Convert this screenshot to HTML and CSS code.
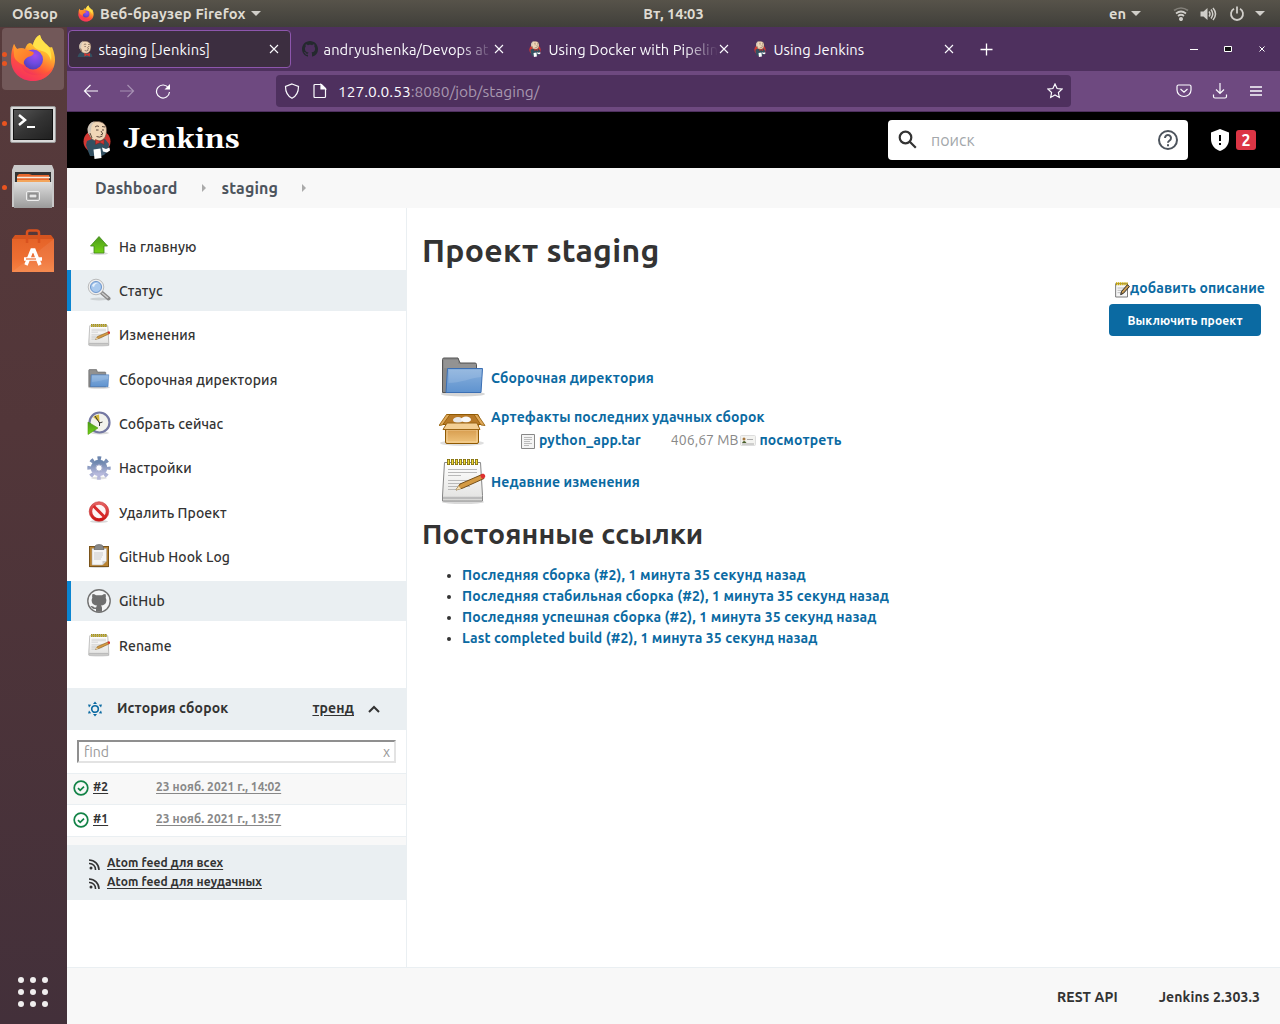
FILE: index.html
```html
<!DOCTYPE html>
<html lang="ru">
<head>
<meta charset="utf-8">
<title>staging [Jenkins]</title>
<link rel="stylesheet" href="styles.css">
</head>
<body>
<svg class="sprite" aria-hidden="true">
  <defs>
    <linearGradient id="fx-body" x1=".8" y1="0" x2=".3" y2="1"><stop offset="0" stop-color="#fff04a"/><stop offset=".35" stop-color="#ffb32e"/><stop offset=".65" stop-color="#ff5a36"/><stop offset="1" stop-color="#e8127c"/></linearGradient>
    <radialGradient id="fx-globe" cx=".6" cy=".3" r=".8"><stop offset="0" stop-color="#a04bf0"/><stop offset=".5" stop-color="#6f4be0"/><stop offset="1" stop-color="#4a3bb0"/></radialGradient>
    <linearGradient id="fx-head" x1="0" y1="0" x2="1" y2="1"><stop offset="0" stop-color="#ffa030"/><stop offset="1" stop-color="#ff6a2a"/></linearGradient>
    <linearGradient id="g-folder" x1="0" y1="0" x2="0" y2="1"><stop offset="0" stop-color="#8ab1dd"/><stop offset="1" stop-color="#5f93cf"/></linearGradient>
    <linearGradient id="g-paper" x1="0" y1="0" x2="0" y2="1"><stop offset="0" stop-color="#fff"/><stop offset="1" stop-color="#e2e2e0"/></linearGradient>
    <linearGradient id="g-box" x1="0" y1="0" x2="0" y2="1"><stop offset="0" stop-color="#cf9040"/><stop offset="1" stop-color="#f0c47c"/></linearGradient>
    <linearGradient id="g-green" x1="0" y1="0" x2="0" y2="1"><stop offset="0" stop-color="#4b9a1c"/><stop offset="1" stop-color="#73d216"/></linearGradient>
    <linearGradient id="g-gear" x1="0" y1="0" x2="0" y2="1"><stop offset="0" stop-color="#6d86ae"/><stop offset="1" stop-color="#b7b9dc"/></linearGradient>
    <linearGradient id="g-red" x1="0" y1="0" x2="0" y2="1"><stop offset="0" stop-color="#e46060"/><stop offset="1" stop-color="#cc1515"/></linearGradient>
    <linearGradient id="g-metal" x1="0" y1="0" x2="0" y2="1"><stop offset="0" stop-color="#dedede"/><stop offset="1" stop-color="#9b9b9b"/></linearGradient>
    <linearGradient id="g-screen" x1="0" y1="0" x2="1" y2="1"><stop offset="0" stop-color="#565656"/><stop offset=".5" stop-color="#343434"/><stop offset="1" stop-color="#202020"/></linearGradient>
    <linearGradient id="g-bag" x1="0" y1="0" x2="0" y2="1"><stop offset="0" stop-color="#e56328"/><stop offset=".6" stop-color="#ee6f33"/><stop offset="1" stop-color="#f58243"/></linearGradient>
  </defs>
  <symbol id="firefox" viewBox="0 0 46 48">
    <path fill="url(#fx-body)" d="M4 10c1 2 2 4 3 5 3-1 6-1 8 0C17 9 20 7 23 11c1-5 4-9 7-10 1 5 5 8 8 11 1 1 3 2 4 1 2 5 3 9 3 13 0 12-10 21-22 21S1 38 1 25c0-6 1-11 3-15z"/>
    <path fill="#ffe24a" d="M30 1c1 5 5 8 8 11 3 4 4 10 3 15-1-5-4-9-9-10-4-1-8-3-9-6 1-5 4-9 7-10z"/>
    <circle cx="23" cy="25.500" r="10" fill="url(#fx-globe)"/>
    <path fill="url(#fx-head)" d="M4 10c1 2 2 4 3 5 3-1 6-1 8 0l8 3c2 1 0 4-5 5-3 2-5 4-4 8-6-2-10-6-10-10 0-4-1-7 0-11z"/>
    <path fill="#ff4a48" opacity=".55" d="M1 26c0 12 9 21 22 21 10 0 18-6 21-15-5 7-12 10-19 9C15 40 12 35 11 30 7 28 4 24 1 26z"/>
  </symbol>
  <symbol id="butler-head" viewBox="0 0 28 28">
    <path fill="#f0d6b7" stroke="#6b5345" stroke-width=".7" d="M5 9c0-6 4-8.500 9-8.500S23.500 3 23.500 9c0 6-2 11-8.500 11C9 20 6 16 5 9z"/>
    <path fill="#cfc5b8" d="M4.500 8c1-4 3-7 7-7.500C9 3 8 6 8 9l-1 4.500-2-1z"/>
    <path stroke="#4b382e" stroke-width=".9" fill="none" d="M12 6q2-2 4-.5M19 5.500l3 .5M13 9h2.500M19 9h2M18 10l1.800 3-2 .8M13.500 15.500q3 1.500 6-.5M7 12l2 5"/>
  </symbol>
  <symbol id="jenkins" viewBox="0 0 28 38">
    <ellipse cx="14" cy="20.500" rx="13.500" ry="12" fill="#d33833"/>
    <path fill="#335061" d="M4 20l5-2 6 2 7-2 4 5-1 7-4 4-3 1H7l-2-5-2-6z"/>
    <use href="#butler-head" width="28" height="28"/>
    <path fill="#d33833" stroke="#81201c" stroke-width=".5" d="M12.500 18.500l4.500 2 4-2v5l-4-2-4.500 2z"/>
    <path fill="#fff" d="M10.500 28.500l7-1 1 9.500-7 1zM19 26.500l4 1.500 3.500-1.500.5 3-3 2-4-1z"/>
  </symbol>
  <symbol id="octocat" viewBox="0 0 16 16">
    <path d="M8 0C3.580 0 0 3.580 0 8c0 3.540 2.290 6.530 5.470 7.590.4.070.55-.17.55-.38 0-.19-.01-.82-.01-1.490-2.010.37-2.530-.49-2.690-.94-.09-.23-.48-.94-.82-1.130-.28-.15-.68-.52-.01-.53.63-.01 1.080.58 1.230.82.72 1.210 1.870.87 2.330.66.07-.52.28-.87.51-1.070-1.780-.2-3.640-.89-3.640-3.950 0-.87.31-1.590.82-2.150-.08-.2-.36-1.020.08-2.120 0 0 .67-.21 2.200.82.64-.18 1.320-.27 2-.27s1.360.09 2 .27c1.530-1.040 2.200-.82 2.200-.82.44 1.100.16 1.920.08 2.120.51.56.82 1.270.82 2.150 0 3.070-1.870 3.750-3.650 3.950.29.25.54.73.54 1.480 0 1.070-.01 1.930-.01 2.200 0 .21.15.46.55.38A8.010 8.010 0 0 0 16 8c0-4.420-3.580-8-8-8z"/>
  </symbol>
  <symbol id="notepad" viewBox="0 0 48 48">
    <ellipse cx="24" cy="45" rx="21" ry="2" fill="#000" opacity=".15"/>
    <path d="M5.500 5.500h36l2 33v5.500h-40V39z" fill="url(#g-paper)" stroke="#888" />
    <path d="M4 41h39" stroke="#bbb" stroke-width="2.500"/>
    <path d="M9 12.500h29M9 15.500h29M9 18.500h13M9 23.500h29M9 26.500h25M9 29.500h22M9 32.500h11" stroke="#b9b9b9" stroke-width="1"/>
    <path d="M8 5h32" stroke="#7d6b10" stroke-width="6" stroke-dasharray="3 1"/>
    <path d="M8.800 5h31" stroke="#efdc3c" stroke-width="4.500" stroke-dasharray="1.400 2.600"/>
    <path d="M17 33l4-6 22-9.500 2 4-21 9.500z" fill="#d49a42" stroke="#75501a"/>
    <path d="M17 33l2.500-4 2.500 3z" fill="#f4dfb3"/><path d="M41 18l3-1.500q3 1 2 4l-3 1.500z" fill="#dd3030"/>
  </symbol>
  <symbol id="folder" viewBox="0 0 48 48">
    <ellipse cx="24" cy="41" rx="22" ry="2.500" fill="#000" opacity=".16"/>
    <path d="M3.500 39.500v-33q0-1.500 1.500-1.500h14l2 5h15q1.500 0 1.500 1.500v28z" fill="#888" stroke="#555"/>
    <path d="M5 8h14M5 10h14M5 12h32M5 14h32" stroke="#aaa" stroke-width=".7"/>
    <path d="M8.500 15.500h35l-1.500 24h-35z" fill="url(#g-folder)" stroke="#3b6fb4"/>
    <path d="M9.500 30c12 0 22-5 33-6v-7H10z" fill="#fff" opacity=".13"/>
  </symbol>
</svg>

<div class="desktop">
  <header class="topbar">
    <span class="topbar-activities">Обзор</span>
    <span class="topbar-app"><svg class="app-icon"><use href="#firefox"/></svg><span>Веб-браузер Firefox</span><i class="caret"></i></span>
    <span class="topbar-clock">Вт, 14:03</span>
    <span class="topbar-status"><span>en</span><i class="caret"></i>
      <svg class="st-wifi" width="16" height="14" viewBox="0 0 16 14" fill="none" stroke="#d0cec9" stroke-width="1.700"><path d="M1 3.500q7-5 14 0" opacity=".4"/><path d="M3 6.500q5-4 10 0M5 9q3-2.500 6 0"/><circle cx="8" cy="12" r="1.200" fill="#d0cec9"/></svg>
      <svg class="st-vol" width="17" height="14" viewBox="0 0 17 14" fill="none" stroke="#d0cec9" stroke-width="1.500"><path d="M.5 4.500h3l4-3.500v12l-4-3.500h-3z" fill="#d0cec9" stroke="none"/><path d="M9 4.500q2 2.500 0 5M11 2.500q3.500 4.500 0 9M13 1q5 6 0 12"/></svg>
      <svg class="st-pow" width="16" height="16" viewBox="0 0 16 16" fill="none" stroke="#d0cec9" stroke-width="1.800"><path d="M5 2.800a6 6 0 1 0 6 0M8 .5v7"/></svg>
      <i class="caret last"></i>
    </span>
  </header>

  <div class="workspace">
    <nav class="dock">
      <div class="dock-item active"><i class="dots two"></i><svg width="46" height="48"><use href="#firefox"/></svg></div>
      <div class="dock-item"><i class="dots"></i>
        <svg width="46" height="40" viewBox="0 0 46 40"><rect x=".5" y="1.500" width="45" height="36" rx="1.500" fill="#d9d9d9" stroke="#999"/><rect x="3.500" y="4.500" width="39" height="30" fill="url(#g-screen)" stroke="#111"/><path d="M9 10l6 5-6 5" fill="none" stroke="#fff" stroke-width="2.500"/><path d="M17 22h8" stroke="#fff" stroke-width="2"/></svg></div>
      <div class="dock-item files"><i class="dots"></i>
        <svg width="42" height="46" viewBox="0 0 42 46"><path d="M2 1h38l2 5v37H0V6z" fill="#c9c9c9"/><rect x="3" y="8" width="36" height="12" fill="#333"/><path d="M5 12l2-2h10l3 1h17v8H5z" fill="#e9682c"/><path d="M5 13.500h33" stroke="#f5ece0" stroke-width="1.500"/><path d="M5 16h33v3H5z" fill="#f3a55c"/><path d="M2 18h38v26H2z" fill="url(#g-metal)"/><rect x="14.500" y="27.500" width="13" height="9" rx="1.500" fill="#aaa" stroke="#eee"/><rect x="17" y="30" width="8" height="4" fill="#e6e6e6" stroke="#777"/></svg></div>
      <div class="dock-item bag">
        <svg width="42" height="45" viewBox="0 0 42 45"><path d="M0 11l3-4h36l3 4z" fill="#d4541f"/><path d="M0 11h42v33H0z" fill="url(#g-bag)"/><path d="M0 44L42 11v33z" fill="#fff" opacity=".07"/><path d="M15 15V5q0-2.500 2.500-2.500h7Q27 2.500 27 5v10" fill="none" stroke="#d9521f" stroke-width="2.500"/><path d="M14 37l6-15h2l6 15M12 31h18" stroke="#fff" stroke-width="3.500" fill="none"/><path d="M14 31h10" stroke="#ee6f33" stroke-width="1.200"/></svg></div>
      <svg class="apps" width="32" height="32" viewBox="0 0 32 32"><g fill="#f0eeee"><circle cx="4" cy="4" r="3"/><circle cx="16" cy="4" r="3"/><circle cx="28" cy="4" r="3"/><circle cx="4" cy="16" r="3"/><circle cx="16" cy="16" r="3"/><circle cx="28" cy="16" r="3"/><circle cx="4" cy="28" r="3"/><circle cx="16" cy="28" r="3"/><circle cx="28" cy="28" r="3"/></g></svg>
    </nav>

    <section class="browser">
      <div class="tabs">
        <div class="tab current"><svg class="fav" viewBox="0 0 26 26"><path d="M1 26q1-6 7-8l14 2q3 2 3 6z" fill="#335061"/><use href="#butler-head" x="-1" width="28" height="28"/><path d="M12 19l4 2.500 5-2.500v6l-5-2-4 2z" fill="#d33833"/></svg><span class="tab-title">staging [Jenkins]</span><svg class="x" viewBox="0 0 10 10"><path d="M1 1l8 8M9 1l-8 8"/></svg></div>
        <div class="tab"><svg class="fav gh"><use href="#octocat"/></svg><span class="tab-title fade">andryushenka/Devops at</span><svg class="x" viewBox="0 0 10 10"><path d="M1 1l8 8M9 1l-8 8"/></svg></div>
        <div class="tab"><svg class="fav"><use href="#jenkins"/></svg><span class="tab-title fade">Using Docker with Pipelin</span><svg class="x" viewBox="0 0 10 10"><path d="M1 1l8 8M9 1l-8 8"/></svg></div>
        <div class="tab"><svg class="fav"><use href="#jenkins"/></svg><span class="tab-title">Using Jenkins</span><svg class="x" viewBox="0 0 10 10"><path d="M1 1l8 8M9 1l-8 8"/></svg></div>
        <svg class="plus" width="13" height="13" viewBox="0 0 13 13"><path d="M6.500 .5v12M.5 6.500h12" stroke="#fff" stroke-width="1.300"/></svg>
        <span class="wm">
          <svg width="8" height="8"><path d="M0 4.500h8" stroke="#fff"/></svg>
          <svg width="8" height="8"><path d="M.5 1.500h7v5h-7z" stroke="#fff" fill="#111" /></svg>
          <svg width="8" height="8"><path d="M1.500 1.500l5 5M6.500 1.500l-5 5" stroke="#fff"/></svg>
        </span>
      </div>
      <div class="navbar">
        <svg class="ic" viewBox="0 0 16 16"><path d="M15 8H2M7.500 2L1.500 8l6 6"/></svg>
        <svg class="ic dim" viewBox="0 0 16 16"><path d="M1 8h13M8.500 2l6 6-6 6"/></svg>
        <svg class="ic" viewBox="0 0 16 16"><path d="M13.500 5A6.500 6.500 0 1 0 14.500 9"/><path d="M15 1v5.500H9.500z" fill="#fff" stroke="none"/></svg>
        <div class="urlbar">
          <svg class="ic" viewBox="0 0 16 16"><path d="M8 1l6.500 2.500c0 6-2 9.500-6.500 11.800C3.500 13 1.500 9.500 1.500 3.500z"/></svg>
          <svg class="ic" viewBox="0 0 16 16"><path d="M3 1.500h6.500l4 4v8q0 1-1 1H3q-1 0-1-1v-11q0-1 1-1z"/><path d="M9 1.500v4.500h4.500z" fill="#fff"/></svg>
          <span class="url"><b>127.0.0.53</b>:8080/job/staging/</span>
          <svg class="ic star" viewBox="0 0 16 16"><path d="M8 1l2.100 4.500 4.900.6-3.600 3.400.9 4.900L8 12l-4.300 2.400.9-4.900L1 6.100l4.900-.6z"/></svg>
        </div>
        <svg class="ic" viewBox="0 0 16 16"><path d="M2.500 2h11q1.500 0 1.500 1.500V7A7 6.500 0 0 1 1 7V3.500Q1 2 2.500 2zM4.500 6L8 9.200 11.500 6"/></svg>
        <svg class="ic" viewBox="0 0 16 16"><path d="M8 0v10M4 6.500l4 4 4-4M1.500 11.500v2q0 1.500 1.500 1.500h10q1.500 0 1.500-1.500v-2"/></svg>
        <svg class="ic menu" viewBox="0 0 16 16"><path d="M2 4h12M2 8h12M2 12h12"/></svg>
      </div>

      <div class="page">
        <div class="jheader">
          <svg class="logo" width="28" height="38"><use href="#jenkins"/></svg>
          <span class="brand">Jenkins</span>
          <div class="search">
            <svg width="20" height="20" viewBox="0 0 20 20" fill="none" stroke="#333" stroke-width="2.200"><circle cx="7.500" cy="7.500" r="5.800"/><path d="M11.800 11.800l6 6"/></svg>
            <span class="search-hint">поиск</span>
            <svg class="help" width="22" height="22" viewBox="0 0 22 22" fill="none" stroke="#4d545d" stroke-width="2"><circle cx="11" cy="11" r="9"/><path d="M8 9a3 3 0 1 1 4.600 2.500q-1.600 1-1.600 2.300M11 15.200v2"/></svg>
          </div>
          <svg class="shield" width="18" height="22" viewBox="0 0 18 22"><path d="M9 0l9 3.500V10c0 6-4 10.500-9 12C4 20.500 0 16 0 10V3.500z" fill="#fff"/><path d="M9 6v6M9 14v2" stroke="#000" stroke-width="2"/></svg>
          <span class="badge">2</span>
        </div>
        <div class="crumbs"><span>Dashboard</span><i></i><span>staging</span><i></i></div>

        <div class="body">
          <aside class="side">
            <div class="tasks">
              <a class="task"><svg viewBox="0 0 24 24"><ellipse cx="12" cy="19.500" rx="9" ry="1.500" opacity=".15"/><path d="M12 2.500L20.500 12H17v7H7v-7H3.500z" fill="url(#g-green)" stroke="#3f8618" stroke-width=".8"/></svg><span>На главную</span></a>
              <a class="task on"><svg viewBox="0 0 24 24"><ellipse cx="12" cy="21" rx="9" ry="1.500" opacity=".12"/><path d="M14.500 14.500l7 6" stroke="#888" stroke-width="4" stroke-linecap="round"/><path d="M15 15l6 5" stroke="#ccc" stroke-width="1.500"/><circle cx="9" cy="9" r="6.800" fill="#a9c9ee" stroke="#eee" stroke-width="2"/><circle cx="9" cy="9" r="7.800" fill="none" stroke="#999" stroke-width=".6"/><circle cx="9" cy="9" r="5.500" fill="none" stroke="#4c7cc0" stroke-width=".7"/><path d="M5 8q2-4 7-3-4 0-5 4z" fill="#e8f1fb"/></svg><span>Статус</span></a>
              <a class="task"><svg><use href="#notepad"/></svg><span>Изменения</span></a>
              <a class="task"><svg><use href="#folder"/></svg><span>Сборочная директория</span></a>
              <a class="task"><svg viewBox="0 0 24 24"><ellipse cx="13" cy="22" rx="9" ry="1.500" opacity=".15"/><circle cx="12.500" cy="11.500" r="10" fill="#f2f2ec" stroke="#7478a2" stroke-width="2.200"/><path d="M12.500 11.500L6 6q2-2 6-2.500z" fill="#d3b63a"/><path d="M8 5l4.500 7 3-1m-3 0v4" stroke="#333" fill="none"/><path d="M1 11l10 6-10 6.500z" fill="url(#g-green)" stroke="#4e9a06" stroke-width=".6"/></svg><span>Собрать сейчас</span></a>
              <a class="task"><svg viewBox="0 0 24 24"><ellipse cx="12" cy="22" rx="8" ry="1.500" opacity=".12"/><circle cx="12" cy="12" r="9.700" fill="none" stroke="url(#g-gear)" stroke-width="4" stroke-dasharray="3.600 4.020" stroke-dashoffset="1.800"/><circle cx="12" cy="12" r="5.800" fill="none" stroke="url(#g-gear)" stroke-width="5"/><circle cx="12" cy="12" r="3.200" fill="#fff" stroke="#7c84b5" stroke-width=".7"/></svg><span>Настройки</span></a>
              <a class="task"><svg viewBox="0 0 24 24"><ellipse cx="12" cy="21.500" rx="9" ry="1.500" opacity=".15"/><circle cx="12" cy="11.500" r="8.300" fill="#fdf4f4" stroke="url(#g-red)" stroke-width="3"/><path d="M6.500 6l11 11" stroke="#d82a2a" stroke-width="3"/><circle cx="12" cy="11.500" r="9.800" fill="none" stroke="#c63030" stroke-width=".6"/></svg><span>Удалить Проект</span></a>
              <a class="task"><svg viewBox="0 0 24 24"><ellipse cx="12" cy="23" rx="10" ry="1" opacity=".15"/><rect x="2.500" y="2.500" width="19" height="20" fill="#b98332" stroke="#7a541b"/><path d="M5 4.500h14.500V17l-4 4H5z" fill="#f5f5f5" stroke="#aaa" stroke-width=".5"/><path d="M15.500 21v-4h4z" fill="#ccc"/><path d="M8 2q1-1.500 4-1.500T16 2l1 3.500H7z" fill="#888" stroke="#555" stroke-width=".6"/><path d="M7 9h9M7 11h9M7 13h8M7 15h7" stroke="#ccc" stroke-width="1.200"/></svg><span>GitHub Hook Log</span></a>
              <a class="task on"><svg viewBox="0 0 24 24"><circle cx="12" cy="12" r="11.200" fill="#f4f5f6" stroke="#737373" stroke-width="1.400"/><path fill="#6f6f6f" d="M5.500 5q2 0 3.500 1.300h6Q16.500 5 18.500 5q.8 2 .2 3.800Q20 11 19 13.500q-1 2.500-5 3 1 1 1 2.500v3.800H9V20q-3 .5-4.500-1.500L3.500 17q3-.3 4 1.500 1 .3 1.800-.3.100-1.200.7-1.700-4-.5-5-3-1-2.500.3-4.700Q4.700 7 5.500 5z"/></svg><span>GitHub</span></a>
              <a class="task"><svg><use href="#notepad"/></svg><span>Rename</span></a>
            </div>
            <div class="hist-head">
              <svg class="sun" width="16" height="16" viewBox="0 0 16 16" fill="none" stroke="#0b6aa2"><circle cx="8" cy="8" r="3.300" stroke-width="1.600"/><path fill="#0b6aa2" stroke="none" d="M6 3L8 .5 10 3zM6 13l2 2.500L10 13zM1 3.500l3.200.3L2 6.500zM1 12.500l3.200-.3L2 9.500zM15 3.500l-3.200.3L14 6.500zM15 12.500l-3.200-.3L14 9.500z"/></svg>
              <span class="hist-title">История сборок</span><a class="hist-trend">тренд</a>
              <svg class="chev" width="12" height="8" viewBox="0 0 12 8"><path d="M1 7l5-5 5 5" fill="none" stroke="#333" stroke-width="2"/></svg>
            </div>
            <div class="hist-find"><div class="find"><span>find</span><span>x</span></div></div>
            <div class="build odd"><svg class="ok" viewBox="0 0 16 16"><circle cx="8" cy="8" r="6.800"/><path d="M5 8.200l2.200 2.200L11 6.600"/></svg><span class="num"><a>#2</a></span><a class="when">23 нояб. 2021 г., 14:02</a></div>
            <div class="build"><svg class="ok" viewBox="0 0 16 16"><circle cx="8" cy="8" r="6.800"/><path d="M5 8.200l2.200 2.200L11 6.600"/></svg><span class="num"><a>#1</a></span><a class="when">23 нояб. 2021 г., 13:57</a></div>
            <div class="build-end"></div>
            <div class="feeds">
              <div><svg viewBox="0 0 11 11"><circle cx="2" cy="9" r="1.500" fill="#333"/><path d="M0 4.500A6 6 0 0 1 6.500 11M0 1a10 10 0 0 1 10 10" fill="none" stroke="#333" stroke-width="1.600"/></svg><a>Atom feed для всех</a></div>
              <div><svg viewBox="0 0 11 11"><circle cx="2" cy="9" r="1.500" fill="#333"/><path d="M0 4.500A6 6 0 0 1 6.500 11M0 1a10 10 0 0 1 10 10" fill="none" stroke="#333" stroke-width="1.600"/></svg><a>Atom feed для неудачных</a></div>
            </div>
          </aside>

          <main class="main">
            <h1>Проект staging</h1>
            <div class="desc"><svg width="15" height="16" viewBox="0 0 48 48" preserveAspectRatio="none"><path d="M2 5h38v40H2z" fill="#f6f6f6" stroke="#777" stroke-width="3"/><path d="M8 18h24M8 25h20M8 32h12" stroke="#bbb" stroke-width="3"/><path d="M3 5h38" stroke="#c9a800" stroke-width="9" stroke-dasharray="4 2"/><path d="M18 38l3-10L40 8l6 6-19 20z" fill="#c99a50" stroke="#222" stroke-width="3"/></svg><a>добавить описание</a></div>
            <div class="actions"><button>Выключить проект</button></div>
            <div class="links">
              <div class="lrow r1"><svg width="48" height="48"><use href="#folder"/></svg><a>Сборочная директория</a></div>
              <div class="lrow r2"><svg width="48" height="48" viewBox="0 0 48 48"><ellipse cx="23" cy="38" rx="22" ry="3" opacity=".13"/><path d="M8 9.500h31l4 10H4z" fill="#b87a28" stroke="#8f5902"/><ellipse cx="19" cy="15" rx="5" ry="3" fill="#e9e9e9"/><ellipse cx="27" cy="14.500" rx="5" ry="3" fill="#f8f8f8"/><path d="M6.500 20h33v17q0 1.500-1.500 1.500H8q-1.500 0-1.500-1.500z" fill="url(#g-box)" stroke="#8f5902"/><path d="M8 25h30v12H8z" fill="none" stroke="#fbe3b4" opacity=".6"/><path d="M8 18h30l3 6.500H4z" fill="#f3cf94" stroke="#9a6414"/><path d="M11 9.500H7.500L0 20.500l3.500-.5zM35 9.500h3.500l7.500 11-4-.5z" fill="#e0a95a" stroke="#8f5902" stroke-width=".8"/></svg>
                <div class="art"><a>Артефакты последних удачных сборок</a>
                  <div class="file"><svg class="doc" width="14" height="15" viewBox="0 0 14 15"><path d="M.5.500h13v14H.5z" fill="#f4f4f4" stroke="#888"/><path d="M3 3.500h8M3 5.500h8M3 7.500h6M3 9.500h8M3 11.500h5" stroke="#bbb"/></svg><a>python_app.tar</a><span class="size">406,67 MB</span><svg class="card" width="16" height="12" viewBox="0 0 16 12"><rect x=".5" y=".5" width="15" height="10" rx="1" fill="#f3f3f0" stroke="#ddd"/><circle cx="4" cy="4" r="1.500" fill="#a5763e"/><path d="M2 8q2-4 4.500 0z" fill="#475d28"/><path d="M7 4.500h6" stroke="#aaa"/><path d="M2 9h12" stroke="#aaa"/></svg><a>посмотреть</a></div></div></div>
              <div class="lrow r3"><svg width="48" height="48"><use href="#notepad"/></svg><a>Недавние изменения</a></div>
            </div>
            <h2>Постоянные ссылки</h2>
            <ul>
              <li><a>Последняя сборка (#2), 1 минута 35 секунд назад</a></li>
              <li><a>Последняя стабильная сборка (#2), 1 минута 35 секунд назад</a></li>
              <li><a>Последняя успешная сборка (#2), 1 минута 35 секунд назад</a></li>
              <li><a>Last completed build (#2), 1 минута 35 секунд назад</a></li>
            </ul>
          </main>
        </div>
        <footer class="foot"><span>REST API</span><span>Jenkins 2.303.3</span></footer>
      </div>
    </section>
  </div>
</div>
</body>
</html>
```
FILE: styles.css
```css
* { box-sizing: border-box; }
html, body { margin: 0; height: 100%; overflow: hidden; }
body { font-family: Ubuntu, "Noto Sans", sans-serif; font-size: 14px; color: #333; white-space: nowrap; }
svg { display: block; flex: none; }
.sprite { position: absolute; width: 0; height: 0; }
.desktop { width: 1280px; height: 1024px; display: flex; flex-direction: column; }

/* GNOME panel */
.topbar { height: 27px; flex: none; display: grid; grid-template-columns: 67px 1fr auto 1fr; align-items: center; background: linear-gradient(#57534a, #403f3a); color: #dfdbd2; font-weight: 700; font-size: 14.670px; }
.topbar-activities { padding-left: 12px; letter-spacing: .15px; }
.topbar-app { display: flex; align-items: center; padding-left: 11px; letter-spacing: .16px; }
.app-icon { width: 16px; height: 17px; margin-right: 6px; }
.topbar-clock { padding-bottom: 1px; }
.topbar-status { display: flex; align-items: center; justify-content: flex-end; padding-right: 15px; }
.caret { border: 5px solid transparent; border-top-color: #d0cec9; border-bottom: 0; margin-left: 5px; }
.caret.last { margin-left: 0; }
.st-wifi { margin-left: 32px; }
.st-vol { margin-left: 11px; }
.st-pow { margin: 0 10px 0 12px; }

.workspace { flex: 1; display: flex; min-height: 0; }

/* Dock */
.dock { width: 67px; background: linear-gradient(#573b3c, #523639 40%, #43303a); display: flex; flex-direction: column; align-items: center; padding-top: 1px; }
.dock-item { width: 62px; height: 62px; margin-bottom: 4px; margin-right: 1px; border-radius: 4px; display: flex; align-items: center; justify-content: center; position: relative; }
.dock-item.active { background: #725859; }
.dock-item.active svg { margin-top: -3px; }
.dock-item.active + .dock-item { margin-bottom: 0; }
.dock-item.files { margin-bottom: 0; }
.dock-item svg { margin-top: 0; }
.dock-item.files svg { margin-top: -1px; }
.dock-item.bag { margin-top: 1px; }
.dots { position: absolute; left: 0; top: 27px; width: 5px; height: 5px; border-radius: 50%; background: #e95420; }
.files .dots { top: 29px; }
.dots.two { top: 24px; box-shadow: 0 9px #e95420; }
.apps { margin: auto 2px 16px 0; }

/* Browser chrome */
.browser { flex: 1; display: flex; flex-direction: column; min-width: 0; }
.tabs { height: 44px; flex: none; background: #4e305e; display: flex; align-items: center; padding: 0 14px 0 1px; color: #fbfbfe; }
.tab { width: 225px; height: 38px; display: flex; align-items: center; padding: 0 13px 0 10px; }
.tab.current { width: 223px; background: #3c2e40; border: 1px solid #8d56ad; border-radius: 4px; margin-right: 1px; padding: 0 11px 0 8px; }
.fav { width: 16px; height: 16px; margin-right: 5.500px; }
.gh { fill: #24292e; }
.tab-title { flex: 1; overflow: hidden; font-size: 14.670px; letter-spacing: .1px; line-height: 22px; padding-top: 2px; }
.fade { mask-image: linear-gradient(to right, #000 80%, transparent); -webkit-mask-image: linear-gradient(to right, #000 80%, transparent); }
.x { width: 10px; height: 10px; margin-left: 1.500px; stroke: #fbfbfe; stroke-width: 1.1; fill: none; }
.plus { margin-left: 13px; }
.wm { margin-left: auto; display: flex; gap: 26px; }
.navbar { height: 41px; flex: none; background: #6e4980; border-bottom: 1px solid #4e305e; display: flex; align-items: center; padding: 0 16px; gap: 20px; }
.ic { width: 16px; height: 16px; fill: none; stroke: #fbfbfe; stroke-width: 1.2; }
.menu { stroke-width: 1.500; }
.dim { opacity: .4; }
.urlbar { width: 795px; height: 32px; margin: 0 auto 0 85px; background: #4e305e; border-radius: 4px; display: flex; align-items: center; padding: 0 8px; gap: 12px; color: #a897af; font-size: 15.500px; }
.urlbar b { font-weight: 400; color: #fbfbfe; }
.url { margin-left: -2px; }
.star { margin-left: auto; }

/* Jenkins header */
.page { flex: 1; display: flex; flex-direction: column; background: #fff; min-height: 0; }
.jheader { height: 56px; flex: none; background: #000; display: flex; align-items: center; padding: 0 24px 0 16px; }
.brand { font-family: Georgia, Gelasio, "DejaVu Serif", serif; font-weight: 700; color: #fff; font-size: 28.800px; margin-left: 12px; line-height: 50px; padding-bottom: 1px; }
.search { width: 300px; height: 40px; border-radius: 4px; background: #fff; margin-left: auto; display: flex; align-items: center; padding: 0 9px 0 10px; color: #a3a7ab; font-size: 16px; }
.search-hint { margin-left: 13px; }
.help { margin-left: auto; }
.shield { margin-left: 23px; }
.badge { width: 20px; height: 20px; margin-left: 7px; background: #dc3545; color: #fff; border-radius: 3px; font-weight: 700; font-size: 16px; line-height: 20px; text-align: center; }
.crumbs { height: 40px; flex: none; background: #f8f8f8; display: flex; align-items: center; padding-left: 28px; font-weight: 600; font-size: 16px; letter-spacing: .15px; color: #4d545d; }
.crumbs i { border: 4px solid transparent; border-left-color: #aaa; border-right: 0; margin: 0 16px 0 24px; }

/* Side panel */
.body { flex: 1; display: flex; min-height: 0; }
.side { width: 340px; border-right: 1px solid #eaeff2; letter-spacing: .12px; }
.tasks { padding-top: 18px; height: 480px; display: flex; flex-direction: column; gap: 4px; }
.task { height: 40.330px; display: flex; align-items: center; padding-left: 20px; gap: 8px; font-weight: 500; color: #333; }
.task span { padding-top: .9px; }
.task svg { width: 24px; height: 24px; }
.task.on { background: #eaeff2; border-left: 4px solid #0b85d1; padding-left: 16px; }
.hist-head { height: 42px; background: #eaeff2; display: flex; align-items: center; padding: 0 26px 2px 20px; font-weight: 600; }
.hist-title { margin-left: 14px; }
.hist-trend { margin-left: auto; text-decoration: underline; text-underline-offset: 2px; }
.sun { margin-top: 2px; }
.chev { margin: 2px 0 0 14px; }
.hist-find { height: 43px; padding: 10px 10px 0; }
.find { width: 319px; height: 23px; border: 2px solid; border-color: #8f8f8f #e3e3e3 #e3e3e3 #8f8f8f; display: flex; align-items: center; justify-content: space-between; padding: 0 4px 0 5px; color: #999; letter-spacing: 0; }
.build { height: 32px; border-top: 1px solid #eaeff2; display: flex; align-items: center; padding: 0 0 4px 6px; font-weight: 700; font-size: 12px; letter-spacing: .06px; }
.build.odd { background: #f8f8f8; height: 31px; padding-bottom: 5px; }
.build a, .feeds a { text-decoration: underline; text-underline-offset: 2px; }
.ok { width: 16px; height: 16px; margin-right: 4px; margin-top: 3px; fill: none; stroke: #138347; stroke-width: 1.7; }
.num { width: 63px; }
.build .when { color: #888; }
.build-end { height: 9px; border-top: 1px solid #eaeff2; background: #f8f8f8; }
.feeds { height: 55px; background: #eaeff2; padding: 8px 0 0 22px; font-weight: 600; font-size: 12px; }
.feeds div { height: 19px; display: flex; align-items: center; gap: 7px; }
.feeds svg { width: 11px; height: 11px; margin-top: 3px; }

/* Main column */
.main { flex: 1; padding: 22px 15px 0 15px; letter-spacing: .12px; }
h1 { margin: 0; font-size: 32px; line-height: 41px; height: 50px; font-weight: 700; letter-spacing: .3px; }
.desc { height: 16px; display: flex; justify-content: flex-end; align-items: center; font-weight: 700; color: #0b6aa2; }
.desc svg { margin-top: 4px; }
.actions { display: flex; justify-content: flex-end; padding: 8px 4px 0 0; }
.actions button { width: 152px; height: 32px; border: 0; padding: 1px 0 0; background: #0b6aa2; color: #fff; border-radius: 4px; font: 600 12px/31px Ubuntu, "Noto Sans", sans-serif; letter-spacing: .12px; }
.links { padding: 17px 0 0 17px; color: #0b6aa2; font-weight: 700; }
.lrow { display: flex; }
.lrow > a, .art { margin-left: 4px; }
.lrow > svg { margin-top: -3px; }
.r1 { height: 50px; align-items: center; }
.r2 { height: 54px; align-items: center; }
.r3 { height: 50px; align-items: center; }
.art { line-height: 20px; padding-bottom: 1px; }
.file { display: flex; align-items: center; padding-left: 30px; height: 24px; margin-top: 1px; }
.doc { margin: 3px 4px 0 0; }
.size { font-weight: 400; color: #888; margin-left: 30px; letter-spacing: .05px; }
.card { margin: 2px 3px 0 2px; }
h2 { margin: 4px 0 0; font-size: 28.400px; line-height: 45px; font-weight: 700; letter-spacing: .05px; }
ul { margin: 9px 0 0; padding-left: 40px; line-height: 21px; font-weight: 700; }
li a { color: #0b6aa2; }
.foot { height: 57px; flex: none; background: #f8f8f8; border-top: 1px solid #eaeff2; display: flex; justify-content: flex-end; align-items: center; gap: 41px; padding: 1px 20px 0 0; font-weight: 600; font-size: 14px; letter-spacing: .1px; }
```
